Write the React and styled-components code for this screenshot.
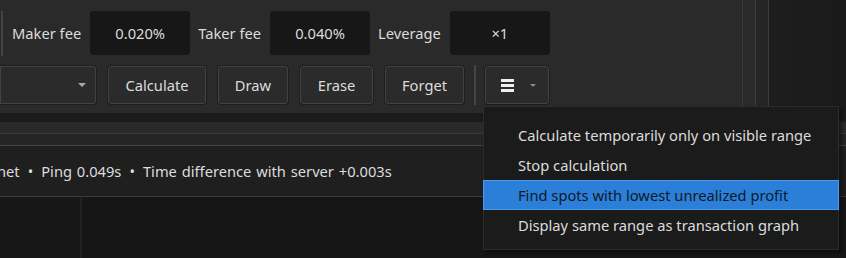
import React from "react";
import styled, { createGlobalStyle } from "styled-components";

const GlobalStyle = createGlobalStyle`
  html, body {
    margin: 0;
    padding: 0;
    background: #1b1b1b;
  }
  * {
    box-sizing: border-box;
  }
`;

const Screen = styled.div`
  position: relative;
  width: 846px;
  height: 258px;
  overflow: hidden;
  display: flex;
  flex-direction: column;
  font-family: "Noto Sans", "Open Sans", sans-serif;
  font-size: 14.7px;
  color: #dcdcdc;
  background: #1b1b1b;
`;

const TopArea = styled.div`
  display: flex;
  height: 113px;
  flex-shrink: 0;
`;

const Panel = styled.div`
  width: 743px;
  background: #2a2a2a;
  border-right: 1px solid #3a3a3a;
  padding-top: 11px;
  display: flex;
  flex-direction: column;
  gap: 9px;
`;

const EdgeColumn = styled.div`
  width: ${(p) => p.$w}px;
  background: ${(p) => p.$bg};
  border-right: 1px solid #3c3c3c;
`;

const RightFill = styled.div`
  flex: 1;
  background: linear-gradient(90deg, #1d1d1d, #1a1a1a);
`;

const Row = styled.div`
  display: flex;
  align-items: center;
  height: ${(p) => p.$h}px;
`;

const Divider = styled.div`
  width: 2px;
  height: ${(p) => p.$h}px;
  background: #444;
  margin: ${(p) => p.$m};
`;

const Label = styled.span`
  margin-right: 9px;
  white-space: nowrap;
`;

const Field = styled.div`
  width: 100px;
  height: 44px;
  background: #171717;
  border-radius: 3px;
  display: flex;
  align-items: center;
  justify-content: center;
  margin-right: 8px;
`;

const Button = styled.div`
  height: 40px;
  min-width: ${(p) => p.$w}px;
  background: #2b2b2b;
  border: 1px solid #1e1e1e;
  box-shadow: inset 0 0 0 1px #434343;
  border-radius: 4px;
  display: flex;
  align-items: center;
  justify-content: center;
  gap: 16px;
  margin-right: 10px;
`;

const Select = styled(Button)`
  width: 97px;
  border-left: none;
  border-radius: 0 4px 4px 0;
  justify-content: flex-end;
  padding-right: 10px;
`;

const Caret = styled.span`
  width: 0;
  height: 0;
  border-left: ${(p) => p.$s}px solid transparent;
  border-right: ${(p) => p.$s}px solid transparent;
  border-top: ${(p) => p.$s}px solid ${(p) => p.$c};
`;

const Burger = styled.span`
  display: flex;
  flex-direction: column;
  gap: 2px;
  margin-left: 2px;
  span {
    width: 13px;
    height: 3px;
    background: #eeeeee;
  }
`;

const Gap = styled.div`
  height: 9px;
  flex-shrink: 0;
  background: #1b1b1b;
`;

const Band = styled.div`
  height: ${(p) => p.$h}px;
  flex-shrink: 0;
  background: ${(p) => p.$bg};
  border-bottom: 1px solid ${(p) => p.$line};
`;

const StatusBar = styled.div`
  height: 51px;
  flex-shrink: 0;
  background: #1f1f1f;
  border-bottom: 1px solid #3a3a3a;
  display: flex;
  align-items: center;
  padding-bottom: 1px;
  white-space: nowrap;
`;

const StatusText = styled.span`
  margin-left: -3px;
  word-spacing: 1px;
`;

const Dot = styled.span`
  margin: 0 8px;
`;

const Lower = styled.div`
  flex: 1;
  display: flex;
  background: #161616;
`;

const LowerSide = styled.div`
  width: 82px;
  background: #171717;
  border-right: 2px solid #222;
`;

const Menu = styled.div`
  position: absolute;
  left: 483px;
  top: 106px;
  width: 356px;
  height: 144px;
  background: #1b1b1b;
  border: 1px solid #2c2c2c;
  box-shadow: 3px 3px 4px rgba(0, 0, 0, 0.45);
  padding-top: 13px;
`;

const MenuItem = styled.div`
  height: 30px;
  display: flex;
  align-items: center;
  padding-left: 34px;
  white-space: nowrap;
  background: ${(p) => (p.$active ? "#2b7fd9" : "transparent")};
  border: 1px solid ${(p) => (p.$active ? "#4c9cec" : "transparent")};
  margin: 0 -1px;
  color: ${(p) => (p.$active ? "#0f1a26" : "#dcdcdc")};
`;

const fees = [
  { label: "Maker fee", value: "0.020%" },
  { label: "Taker fee", value: "0.040%" },
  { label: "Leverage", value: "×1" },
];

const actions = [
  { text: "Calculate", w: 100 },
  { text: "Draw", w: 72 },
  { text: "Erase", w: 75 },
  { text: "Forget", w: 81 },
];

const menuItems = [
  "Calculate temporarily only on visible range",
  "Stop calculation",
  "Find spots with lowest unrealized profit",
  "Display same range as transaction graph",
];

export default function App() {
  return (
    <Screen>
      <GlobalStyle />
      <TopArea>
        <Panel>
          <Row $h={44}>
            <Divider $h={45} $m="0 9px 0 1px" />
            {fees.map((f) => (
              <React.Fragment key={f.label}>
                <Label>{f.label}</Label>
                <Field>{f.value}</Field>
              </React.Fragment>
            ))}
          </Row>
          <Row $h={42}>
            <Select>
              <Caret $s={4} $c="#a8a8a8" />
            </Select>
            {actions.map((a) => (
              <Button key={a.text} $w={a.w}>
                {a.text}
              </Button>
            ))}
            <Divider $h={40} $m="0 8px 0 -1px" />
            <Button $w={66}>
              <Burger>
                <span />
                <span />
                <span />
              </Burger>
              <Caret $s={3} $c="#8a8a8a" />
            </Button>
          </Row>
        </Panel>
        <EdgeColumn $w={13} $bg="#2a2a2a" />
        <EdgeColumn $w={13} $bg="#252525" />
        <RightFill />
      </TopArea>
      <Gap />
      <Band $h={12} $bg="#2a2a2a" $line="#3b3b3b" />
      <Band $h={12} $bg="#252525" $line="#444" />
      <StatusBar>
        <StatusText>
          net<Dot>•</Dot>Ping 0.049s<Dot>•</Dot>Time difference with server
          +0.003s
        </StatusText>
      </StatusBar>
      <Lower>
        <LowerSide />
      </Lower>
      <Menu>
        {menuItems.map((m, i) => (
          <MenuItem key={m} $active={i === 2}>
            {m}
          </MenuItem>
        ))}
      </Menu>
    </Screen>
  );
}
